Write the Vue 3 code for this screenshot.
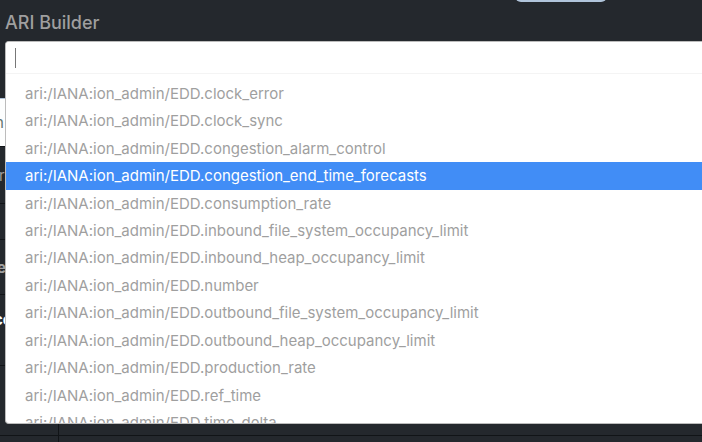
<script setup>
import { ref } from 'vue'

const query = ref('')
const active = ref('congestion_end_time_forecasts')
const names = [
  'clock_error',
  'clock_sync',
  'congestion_alarm_control',
  'congestion_end_time_forecasts',
  'consumption_rate',
  'inbound_file_system_occupancy_limit',
  'inbound_heap_occupancy_limit',
  'number',
  'outbound_file_system_occupancy_limit',
  'outbound_heap_occupancy_limit',
  'production_rate',
  'ref_time',
  'time_delta'
]
</script>

<template>
  <main class="page">
    <header class="top">
      <label for="ari" class="title">ARI Builder</label>
      <span class="pill"></span>
    </header>
    <div class="backdrop">
      <div class="row space"></div>
      <div class="row field">n</div>
      <div class="row caption">r</div>
      <div class="row band"></div>
      <div class="row heading">e</div>
      <div class="row item">cc</div>
      <div class="row cells"><span class="cell"></span></div>
      <div class="row last"><span class="cell"></span></div>
    </div>
    <section class="dropdown">
      <input id="ari" v-model="query" class="search" type="text" autocomplete="off" />
      <span class="caret"></span>
      <ul class="options" role="listbox" aria-label="ARI Builder">
        <li
          v-for="name in names"
          :key="name"
          class="option"
          :class="{ active: name === active }"
          role="option"
          :aria-selected="name === active"
          @mouseenter="active = name"
        >ari:/IANA:ion_admin/EDD.{{ name }}</li>
      </ul>
    </section>
  </main>
</template>

<style>
body {
  background: #24282d;
}
</style>

<style scoped>
.page {
  position: relative;
  min-height: 100vh;
  overflow: hidden;
  background: #24282d;
  font-family: Inter, "Liberation Sans", sans-serif;
  font-size: 15px;
  color: #9f9f9f;
}
.top {
  height: 41px;
  display: flex;
  align-items: center;
  padding-left: 5px;
}
.title {
  font-size: 18px;
  line-height: 24px;
  font-weight: 500;
  padding-top: 4px;
}
.pill {
  position: absolute;
  top: -30px;
  right: 95px;
  width: 92px;
  height: 32px;
  border-radius: 6px;
  background: #b0c4da;
}
.row {
  box-sizing: border-box;
  display: flex;
  align-items: center;
  border-bottom: 1px solid #111417;
  white-space: nowrap;
}
.space {
  height: 57px;
  border-bottom: 0;
}
.field {
  height: 49px;
  background: #fdfefe;
  border-top: 1px solid #b0c4da;
  color: #62756f;
  text-indent: -5px;
}
.caption {
  height: 57px;
  text-indent: -1px;
}
.band {
  height: 36px;
}
.heading {
  height: 55px;
  font-weight: 700;
  text-indent: -3px;
}
.item {
  height: 71px;
  align-items: flex-start;
  padding-top: 15px;
  font-weight: 700;
  color: #ffffff;
  text-indent: -6px;
}
.cells {
  height: 70px;
  align-items: stretch;
}
.last {
  height: 24px;
  align-items: stretch;
  border-bottom: 0;
}
.cell {
  box-sizing: border-box;
  width: 59px;
  border-right: 1px solid #111417;
}
.dropdown {
  position: absolute;
  box-sizing: border-box;
  top: 41px;
  left: 5px;
  right: 0;
  height: 383px;
  overflow: hidden;
  border: 1px solid #bcbcbc;
  border-right: 0;
  border-radius: 4px 0 0 4px;
  background: #ffffff;
}
.search {
  display: block;
  box-sizing: border-box;
  width: 100%;
  height: 32px;
  padding: 0 9px;
  border: 0;
  border-bottom: 1px solid #f4f4f4;
  outline: 0;
  background: #ffffff;
  font: inherit;
  color: #444444;
}
.caret {
  position: absolute;
  top: 6px;
  left: 9px;
  width: 1px;
  height: 20px;
  background: #777777;
}
.options {
  box-sizing: border-box;
  display: grid;
  grid-auto-rows: 1fr;
  height: 368px;
  margin: 0;
  padding: 6px 0 5px;
  list-style: none;
}
.option {
  display: flex;
  align-items: center;
  padding: 0 19px;
  line-height: 18px;
  white-space: nowrap;
}
.active {
  background: #418df6;
  color: #ffffff;
}
</style>
